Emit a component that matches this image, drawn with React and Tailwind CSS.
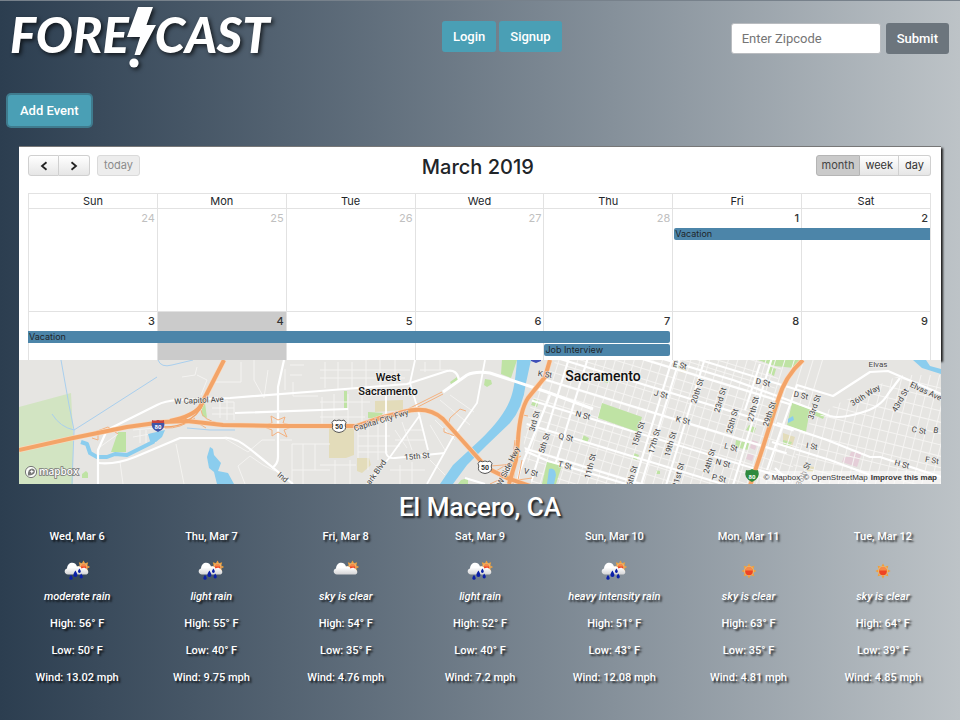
import React from "react";

const shadowText = "[text-shadow:2px_2px_2px_rgba(0,0,0,0.75)]";

const forecast = [
  { date: "Wed, Mar 6", icon: "rain", text: "moderate rain", high: 56, low: 50, wind: "13.02" },
  { date: "Thu, Mar 7", icon: "rain", text: "light rain", high: 55, low: 40, wind: "9.75" },
  { date: "Fri, Mar 8", icon: "cloud", text: "sky is clear", high: 54, low: 35, wind: "4.76" },
  { date: "Sat, Mar 9", icon: "rain", text: "light rain", high: 52, low: 40, wind: "7.2" },
  { date: "Sun, Mar 10", icon: "rain", text: "heavy intensity rain", high: 51, low: 43, wind: "12.08" },
  { date: "Mon, Mar 11", icon: "sun", text: "sky is clear", high: 63, low: 35, wind: "4.81" },
  { date: "Tue, Mar 12", icon: "sun", text: "sky is clear", high: 64, low: 39, wind: "4.85" },
];

const days = ["Sun", "Mon", "Tue", "Wed", "Thu", "Fri", "Sat"];

function Sun({ cx, cy, r }) {
  const rays = [0, 45, 90, 135, 180, 225, 270, 315];
  return (
    <g>
      {rays.map((a) => (
        <path
          key={a}
          d={`M${cx - 1.6} ${cy - r - 0.2}L${cx} ${cy - r - 3}L${cx + 1.6} ${cy - r - 0.2}Z`}
          fill="#f0a03c"
          transform={`rotate(${a} ${cx} ${cy})`}
        />
      ))}
      <circle cx={cx} cy={cy} r={r + 0.4} fill="#f2b765" />
      <circle cx={cx} cy={cy + 0.4} r={r - 0.8} fill="#ee4423" />
      <path d={`M${cx - r + 1} ${cy - 0.6}A${r - 1} ${r - 1} 0 0 1 ${cx + r - 1} ${cy - 0.6}Z`} fill="#f58a4a" />
    </g>
  );
}

function WeatherIcon({ kind }) {
  return (
    <svg width="28" height="22" viewBox="0 0 28 22" aria-hidden="true">
      <defs>
        <linearGradient id="cloud" x1="0" y1="0" x2="0" y2="1">
          <stop offset="0.4" stopColor="#ffffff" />
          <stop offset="1" stopColor="#d4d4d6" />
        </linearGradient>
      </defs>
      {kind === "sun" ? (
        <Sun cx={14} cy={11} r={4.6} />
      ) : (
        <g>
          <Sun cx={20.5} cy={7} r={3.6} />
          <path
            d="M5 14.5C1 14.5 0.6 9.5 4 8.6C4.2 4.8 6.6 2.8 9.2 2.8C11.8 2.8 13.4 4.4 14 6.6C16 5.6 18 6.8 18.4 8.4C21 7.2 22.4 7.8 24 9.4C26.2 11.4 25.6 14.5 22.6 14.5Z"
            fill="url(#cloud)"
          />
          {kind === "rain" && (
            <g fill="#0a1fa8">
              <path d="M12.4 10.6C13.8 13 14.4 13.8 14.4 15A2 2 0 0 1 10.4 15C10.4 13.8 11 13 12.4 10.6Z" />
              <path d="M16.4 8.6C17.4 10.2 17.8 10.8 17.8 11.6A1.4 1.4 0 0 1 15 11.6C15 10.8 15.4 10.2 16.4 8.6Z" />
              <path d="M18.2 13.4C19.4 15.2 19.8 16 19.8 16.8A1.6 1.6 0 0 1 16.6 16.8C16.6 16 17 15.2 18.2 13.4Z" />
              <path d="M8 14.8C9.2 16.6 9.6 17.4 9.6 18.2A1.6 1.6 0 0 1 6.4 18.2C6.4 17.4 6.8 16.6 8 14.8Z" />
            </g>
          )}
        </g>
      )}
    </svg>
  );
}

function Logo() {
  return (
    <h1
      aria-label="Forecast"
      className="flex h-[62px] items-start font-['Lato',sans-serif] text-[49px] leading-[56px] font-black italic text-white drop-shadow-[2px_2px_2px_rgba(0,0,0,0.7)]"
    >
      <span>FORE</span>
      <svg width="30" height="62" viewBox="0 0 30 62" className="-mx-[2px] shrink-0" aria-hidden="true">
        <path d="M11 1H26L19.5 19H29L13 49H7.5L13 31H0Z" fill="#fff" />
        <circle cx="7" cy="57" r="4.6" fill="#fff" />
      </svg>
      <span>CAST</span>
    </h1>
  );
}

function Header() {
  return (
    <header className="grid grid-cols-[46%_1fr_auto] items-start border-t border-[#77818b] pt-[5px] pr-[11px] pl-[10px]">
      <Logo />
      <nav className="flex gap-[3px] pt-[15px]">
        <button className="h-[31px] rounded-[3px] bg-[#4a9fb5] px-[11px] text-[13px] font-medium text-white">Login</button>
        <button className="h-[31px] rounded-[3px] bg-[#4a9fb5] px-[11px] text-[13px] font-medium text-white">Signup</button>
      </nav>
      <form className="flex gap-[5px] pt-[17px]" onSubmit={(e) => e.preventDefault()}>
        <input
          type="text"
          aria-label="Zipcode"
          placeholder="Enter Zipcode"
          className="h-[31px] w-[150px] rounded-[3px] border border-[#b9bcc0] bg-white px-[10px] text-[13px] placeholder:text-[#757575]"
        />
        <button className="h-[31px] rounded-[3px] bg-[#6c757d] px-[11px] text-[13px] font-medium text-white">Submit</button>
      </form>
    </header>
  );
}

const todayBg = (i, week) => (week === 2 && i === 1 ? "bg-[#cbcbcb]" : "");

function NumberRow({ numbers, week }) {
  return (
    <tr className="h-[20px]">
      {numbers.map((n, i) => (
        <td
          key={n}
          className={`border-t border-l border-[#e2e2e2] pr-[2px] text-right align-top text-[11px] leading-[18px] ${n > 20 ? "text-[#c0c0c0]" : "font-medium text-[#333]"} ${todayBg(i, week)}`}
        >
          {n}
        </td>
      ))}
    </tr>
  );
}

function Blank({ i, week }) {
  return <td className={`border-l border-[#e2e2e2] ${todayBg(i, week)}`} />;
}

function Event({ title, round }) {
  return (
    <a href="#event" className={`block h-[12px] overflow-hidden bg-[#4c85a9] pl-px text-[9px] leading-[12px] text-[#212529] ${round}`}>
      {title}
    </a>
  );
}

function Calendar() {
  const tool = "h-[21px] border border-[#d0d0d0] text-[11px] text-[#333]";
  return (
    <section className="h-[214px] overflow-hidden border-t border-[#777] bg-white pt-[8px] pr-[10px] pl-[9px] font-['Inter',sans-serif] shadow-[2px_2px_2px_#222]">
      <div className="flex h-[24px] items-start justify-between">
        <div className="flex">
          <button aria-label="Previous" className={`${tool} flex w-[31px] items-center justify-center rounded-l-[3px] bg-linear-to-b from-white to-[#e6e6e6]`}>
            <svg width="8" height="10" viewBox="0 0 8 10" fill="none" stroke="#222" strokeWidth="1.8"><path d="M6.5 1.2L2 5L6.5 8.8" /></svg>
          </button>
          <button aria-label="Next" className={`${tool} flex w-[31px] items-center justify-center rounded-r-[3px] border-l-0 bg-linear-to-b from-white to-[#e6e6e6]`}>
            <svg width="8" height="10" viewBox="0 0 8 10" fill="none" stroke="#222" strokeWidth="1.8"><path d="M1.5 1.2L6 5L1.5 8.8" /></svg>
          </button>
          <button disabled className="ml-[7px] h-[21px] rounded-[3px] border border-[#dadada] bg-[#ededed] px-[6px] text-[11px] text-[#8b8b8b]">today</button>
        </div>
        <h2 className="text-[20px] leading-[24px] font-medium text-[#212529]">March 2019</h2>
        <div className="flex justify-end">
          <button className="h-[21px] rounded-l-[3px] border border-[#b5b5b5] bg-[#cacaca] px-[5px] text-[11px] text-[#444]">month</button>
          <button className={`${tool} border-l-0 bg-linear-to-b from-white to-[#e6e6e6] px-[5px]`}>week</button>
          <button className={`${tool} rounded-r-[3px] border-l-0 bg-linear-to-b from-white to-[#e6e6e6] px-[6px]`}>day</button>
        </div>
      </div>
      <table className="mt-[14px] w-full table-fixed border-separate border-spacing-0 border-t border-r border-[#e2e2e2]">
        <thead>
          <tr className="h-[14px]">
            {days.map((d) => (
              <th key={d} className="border-l border-[#e2e2e2] text-[11px] leading-[14px] font-normal text-[#212529]">{d}</th>
            ))}
          </tr>
        </thead>
        <tbody>
          <NumberRow week={1} numbers={[24, 25, 26, 27, 28, 1, 2]} />
          <tr className="h-[12px]">
            {[0, 1, 2, 3, 4].map((i) => <Blank key={i} i={i} week={1} />)}
            <td colSpan={2} className="border-l border-[#e2e2e2] pl-px"><Event title="Vacation" round="rounded-l-[2px]" /></td>
          </tr>
          <tr className="h-[71px]">{days.map((d, i) => <Blank key={d} i={i} week={1} />)}</tr>
          <NumberRow week={2} numbers={[3, 4, 5, 6, 7, 8, 9]} />
          <tr className="h-[12px]">
            <td colSpan={5} className="pr-[2px]"><Event title="Vacation" round="rounded-r-[2px]" /></td>
            <Blank i={5} week={2} />
            <Blank i={6} week={2} />
          </tr>
          <tr className="h-[13px]">
            {[0, 1, 2, 3].map((i) => <Blank key={i} i={i} week={2} />)}
            <td className="border-l border-[#e2e2e2] pt-px pr-[2px]"><Event title="Job Interview" round="rounded-[2px]" /></td>
            <Blank i={5} week={2} />
            <Blank i={6} week={2} />
          </tr>
          <tr className="h-[71px]">{days.map((d, i) => <Blank key={d} i={i} week={2} />)}</tr>
        </tbody>
      </table>
    </section>
  );
}

const streets = [
  ["W Capitol Ave", 199, 400, -3], ["Capital City Fwy", 381, 420, -17], ["15th St", 417, 456, -5],
  ["ark Blvd", 376, 472, -54], ["Ind", 283, 477, 40], ["K St", 545, 374, 8], ["3rd St", 534, 421, -75],
  ["5th St", 544, 443, -72], ["N St", 583, 415, 14], ["Q St", 566, 437, 12], ["T St", 565, 465, 14],
  ["V St", 531, 472, 14], ["11th St", 590, 466, -76], ["15th St", 638, 434, -72], ["17th St", 654, 441, -74],
  ["19th St", 670, 444, -74], ["21st St", 678, 475, -74], ["16th St", 631, 478, -74], ["24th St", 709, 461, -74],
  ["25th St", 732, 421, -74], ["27th St", 753, 409, -76], ["29th St", 769, 414, -72], ["33rd St", 814, 407, -72],
  ["20th St", 697, 391, -72], ["23rd St", 720, 400, -74], ["E St", 680, 365, 12], ["J St", 661, 394, 14],
  ["K St", 683, 420, 14], ["L St", 731, 447, 14], ["N St", 723, 463, 14], ["P St", 719, 478, 14],
  ["D St", 763, 382, 12], ["D St", 801, 395, 12], ["36th Way", 865, 395, -32], ["43rd St", 900, 400, -60],
  ["C St", 919, 430, 10], ["B", 936, 430, 10], ["F St", 932, 460, 10], ["H St", 902, 464, 14],
  ["I St", 812, 446, 10], ["Elvas", 878, 364, 0], ["Elvas Ave", 926, 391, 25], ["W Side Hwy", 508, 466, -64],
  ["36th St", 803, 474, -66],
];

const steps = (from, to, by) => {
  const out = [];
  for (let v = from; v <= to; v += by) out.push(v);
  return out;
};

function Shield50({ x, y }) {
  return (
    <g transform={`translate(${x} ${y})`}>
      <path d="M-5-6Q-2.5-4.6 0-6Q2.5-4.6 5-6L7-3.5Q5.6-1 6.6 1.5Q6.4 5.5 0 6.5Q-6.4 5.5-6.6 1.5Q-5.6-1-7-3.5Z" fill="#fff" stroke="#555" strokeWidth="1" />
      <text y="3" textAnchor="middle" fontSize="7" fontWeight="700" fill="#333">50</text>
    </g>
  );
}

function MapDrawing() {
  return (
    <svg viewBox="19 360 922 124" preserveAspectRatio="xMidYMid slice" className="block h-full w-full" role="img" aria-label="Map of Sacramento">
      <defs>
        <clipPath id="east"><path d="M556 360H941V484H532L523 440L532 400Z" /></clipPath>
        <clipPath id="outer"><path d="M835 405L900 375H941V484H790L800 430Z" /></clipPath>
      </defs>
      <rect x="19" y="360" width="922" height="124" fill="#e6e5e2" />
      <path d="M19 407L71 393L73 433V484H19Z" fill="#d2e4c2" />

      <g fill="#e3dcba">
        <path d="M329 428H354V455L346 458H329Z" />
        <path d="M375 401L403 400V410L375 412Z" />
        <path d="M357 458H369L371 465L362 473L357 471Z" />
        <path d="M783 433L795 437L792 447L783 443ZM679 367L686 369V373L680 372Z" />
        <path d="M808 466L815 467L813 472H807Z" />
      </g>
      <g fill="#bfe3a4">
        <path d="M118 432H126V452H111Z" />
        <path d="M82 474L86 471L88 473V478H82ZM202 403H205L207 418L202 416Z" />
        <path d="M368 412L383 413L378 420L368 418ZM344 391H347V408H344ZM450 382L457 377L458 380L451 384Z" />
        <path d="M485 379L491 380L492 384L487 387L484 385ZM502 360H517L511 378L501 374Z" />
        <path d="M534 399L539 401L537 407L531 405Z" />
        <path d="M583 435L589 438L587 443L581 440ZM634 453L639 455L637 460L632 458Z" />
        <path d="M461 480L468 478V484H458Z" />
        <path d="M769 366L776 369L774 376L767 372ZM758 360H803L794 368L775 366Z" />
        <path d="M749 425L756 428L754 433L746 430ZM736 440L749 443L748 450L735 447ZM783 440L792 442L790 446L783 445ZM815 411L825 415L823 419L814 415ZM606 378L611 379L609 383L604 382ZM676 364L680 366L678 371L674 369ZM656 470L660 471V474H656Z" />
      </g>
      <g fill="#e5ced8">
        <path d="M851 452H862L857 467L842 462L844 457L849 457Z" />
        <path d="M752 440L758 442L755 450L750 448ZM748 453L754 455L752 461L746 459Z" />
      </g>

      <g fill="none" stroke="#a9cfee" strokeWidth="1">
        <path d="M61 360L69 405L74 430L72 484M157 377L93 418L74 430Q60 427 52 414M158 360Q161 368 172 365L193 360M187 428L210 430H235" />
      </g>
      <g fill="none" stroke="#f4f3f1" strokeWidth="1">
        <path d="M182 377L195 375L197 367M197 375L207 380L201 395M241 362V382H215M254 360V380L264 398L268 370M290 365H304M290 375H302M293 382V396H318M285 369V390" />
        <path d="M215 402H234V420M220 400V418M227 400V420M212 408H234M212 414H234M133 430L156 428M133 437L150 434M140 430V443M146 430V443M100 447L118 434M176 444L184 484M120 462L123 484" />
        <path d="M238 466L250 456L263 465L275 471M238 466L245 484M292 444H330M292 444V484M303 444V484M315 444V470M280 440H292M292 470H330M224 438L248 452L262 440H275" />
        <path d="M320 370H410M325 362V388M338 362V389M352 362V388M366 360V387M380 360V385M395 360V384M320 378H405M322 397V425M334 394V425M348 394V426M362 394V424M320 402H370M320 417H365M358 430V458M368 428V470M378 425V460M358 436H390M358 446H400M358 452H388M320 465H356M335 460V484M350 460V484M395 430L407 448M402 422L412 450M395 440H425M404 430H422M430 425L445 450M435 420L455 440M440 400L470 425M450 395L474 412M420 370H448M425 362V372M440 360V370M430 460L445 475M400 465V484M412 462V484M390 470H425" />
      </g>

      <g clipPath="url(#east)">
        <g transform="rotate(17 640 420)" stroke="#f5f4f2" strokeWidth="1" fill="none">
          {steps(290, 550, 10).map((y) => <path key={y} d={`M480 ${y}H${y < 400 ? 760 : 800}`} />)}
          {steps(500, 800, 9).map((x) => <path key={x} d={`M${x} 250V600`} />)}
        </g>
        <g transform="rotate(17 640 420)" stroke="#fff" strokeWidth="2.1" fill="none">
          {[345, 361, 385, 409, 433, 457, 481].map((y) => <path key={y} d={`M480 ${y}H790`} />)}
          {[554, 572, 653, 660, 684, 748].map((x) => <path key={x} d={`M${x} 250V600`} />)}
        </g>
      </g>
      <g clipPath="url(#outer)">
        <g transform="rotate(14 860 430)" stroke="#f5f4f2" strokeWidth="1" fill="none">
          {steps(370, 510, 11).map((y) => <path key={y} d={`M770 ${y}H970`} />)}
          {steps(780, 970, 9).map((x) => <path key={x} d={`M${x} 340V520`} />)}
        </g>
      </g>
      <g fill="#bfe3a4">
        <path d="M602 403L642 417L638 432L598 418Z" />
        <path d="M547 462L562 465L556 484H542Z" />
        <path d="M792 403L810 409L806 432L787 425Z" />
      </g>

      <path d="M81 442L87 444L90 453L97 457L107 457L115 454L127 455L143 447L153 442L156 434" fill="none" stroke="#8bcdee" strokeWidth="4" strokeLinejoin="round" />
      <path d="M148 434L165 430L162 437L156 442L150 441Z" fill="#8bcdee" />
      <path d="M210 447L207 457L209 468L214 472L217 484H234L228 473L218 471L221 463L214 455L213 449Z" fill="#8bcdee" />
      <path d="M517 360H531L526 383Q523 408 510 423L487 445L467 465L453 484H440L453 465L480 440Q503 418 510 400Q515 388 517 360Z" fill="#8bcdee" />
      <path d="M549 469Q555 467 556 475L554 484H547Z" fill="#8bcdee" />
      <path d="M913 360L922 368L941 374V369L930 366L926 360ZM788 419L793 416L794 420L788 423Z" fill="#8bcdee" />

      <g fill="none" stroke="#fff" strokeWidth="2.2" strokeLinejoin="round">
        <path d="M98 484V450L107 430L157 405Q165 401 177 400L230 398L320 391L407 384L447 371Q457 369 459 380" />
        <path d="M98 463Q115 465 135 457L180 438H223Q234 436 250 449L293 484" />
        <path d="M284 360L278 387V457Q278 464 272 468M235 413L348 409" />
        <path d="M415 360L410 383L418 410L428 450M485 360L477 403L453 437L427 484M420 415L390 457L367 484" strokeWidth="1.8" />
        <path d="M386 393V453Q388 459 395 458L445 453" strokeWidth="1.8" />
        <path d="M443 392L467 375Q475 371 490 373L547 392L593 409" strokeWidth="3" />
        <path d="M550 395L520 470L517 484M465 478L485 484M525 451L548 461L640 488" />
        <path d="M660 358L733 380L780 397L830 416Q840 419 860 413Q880 408 888 394L900 378" />
        <path d="M767 470L797 385L833 396L870 372L888 371L941 394" />
        <path d="M777 423L827 440L870 457H880L941 477M772 442L830 460L870 475M760 364L745 410M775 468L790 482" />
      </g>

      <g fill="none" stroke="#f4b17f" strokeWidth="1">
        <path d="M408 409L442 392M410 411L443 394M448 425L450 418L460 409L466 411M444 428V432L458 437M523 415L528 416" />
        <path d="M262 426L272 423L271 416L278 420L285 417L283 423L294 426M262 426L272 430L272 436L278 432L287 437L284 430L294 426" />
        <path d="M92 433L108 427L118 434M92 438L98 440V434M201 410Q201 420 222 424M187 421Q198 422 206 428M165 428Q180 429 195 418" />
        <path d="M491 466L515 464L513 484M496 471L521 456M509 475L490 484M522 460L518 480L532 478M515 440L512 464" />
      </g>
      <g fill="none" stroke="#fbd9bd" strokeLinejoin="round">
        <path d="M19 450L73 438L127 427L163 422L187 421L223 425L277 426H357L380 418L403 412Q428 405 443 419L487 468L507 478L530 486" strokeWidth="5.2" />
        <path d="M550 360L545 377L528 398Q520 410 518 440L516 460L509 484M803 360Q785 376 778 400L763 447L750 486M224 360L200 407Q193 416 170 421" strokeWidth="5.2" />
      </g>
      <g fill="none" stroke="#f3a468" strokeLinejoin="round">
        <path d="M19 450L73 438L127 427L163 422L187 421L223 425L277 426H357L380 418L403 412Q428 405 443 419L487 468L507 478L530 486" strokeWidth="4" />
        <path d="M550 360L545 377L528 398Q520 410 518 440L516 460L509 484M803 360Q785 376 778 400L763 447L750 486M224 360L200 407Q193 416 170 421" strokeWidth="4" />
        <path d="M204 402Q198 417 184 422M200 406L185 419" strokeWidth="1.4" />
        <path d="M163 427Q180 427 190 420" strokeWidth="1.4" />
      </g>

      <g fontSize="8" fill="#444" stroke="#f0efed" strokeWidth="1.4" strokeOpacity="0.8" paintOrder="stroke" textAnchor="middle">
        {streets.map(([name, x, y, angle]) => (
          <text key={`${name}${x}`} transform={`translate(${x} ${y}) rotate(${angle})`} y="3">{name}</text>
        ))}
      </g>
      <g fill="#111" stroke="#f3f2f0" strokeWidth="2" strokeOpacity="0.8" paintOrder="stroke" textAnchor="middle" fontWeight="500">
        <text x="388" y="381" fontSize="11">West</text>
        <text x="388" y="395" fontSize="11">Sacramento</text>
        <text x="603" y="381" fontSize="14">Sacramento</text>
      </g>

      <path d="M152 421Q155 422 158 420Q161 422 164 421Q166 429 158 432Q150 429 152 421Z" fill="#3f55a8" />
      <path d="M152 423V420Q155 421 158 420Q161 421 164 420V423Z" fill="#c8443c" />
      <text x="158" y="429" textAnchor="middle" fontSize="6" fontWeight="700" fill="#fff">80</text>
      <path d="M531 360H541V361L536 363L531 361Z" fill="#3f4fb8" />
      <Shield50 x={339} y={426} />
      <Shield50 x={485} y={467} />
      <path d="M746 470Q749 471 752 469Q755 471 758 470Q761 478 752 482Q743 478 746 470Z" fill="#2f8a3e" />
      <text x="752" y="479" textAnchor="middle" fontSize="6" fontWeight="700" fill="#fff">80</text>
    </svg>
  );
}

function MapPanel() {
  return (
    <section className="relative h-[124px] overflow-hidden">
      <MapDrawing />
      <a href="#mapbox" aria-label="mapbox" className="absolute bottom-[4px] left-[5px]">
        <svg width="60" height="16" viewBox="0 0 60 16" className="block font-['Open_Sans',sans-serif]">
          <circle cx="7" cy="8" r="5.6" fill="#fff" fillOpacity="0.9" stroke="#777" strokeWidth="1" />
          <path d="M4 11.4Q3.4 5 8 4.4Q11.4 5 10.8 8Q10 11.6 4 11.4Z" fill="#777" />
          <path d="M7.8 5.4L8.5 7L10 7.6L8.5 8.3L7.8 9.8L7.1 8.3L5.6 7.6L7.1 7Z" fill="#fff" />
          <text x="15" y="11" fontSize="10" fontWeight="600" fill="#fff" stroke="#777" strokeWidth="1.6" paintOrder="stroke">mapbox</text>
        </svg>
      </a>
      <div className="absolute right-0 bottom-0 flex h-[13px] items-center gap-[3px] bg-white/50 pr-[4px] pl-[4px] font-['Liberation_Sans',sans-serif] text-[8px] leading-[13px] text-[#333]">
        <a href="#mapbox">© Mapbox</a>
        <a href="#osm">© OpenStreetMap</a>
        <a href="#improve" className="font-bold">Improve this map</a>
      </div>
    </section>
  );
}

export default function App() {
  return (
    <div className="min-h-screen bg-linear-to-r from-[#2c3e50] to-[#bdc3c7] font-['Roboto',sans-serif]">
      <Header />
      <div className="px-[8px] pt-[27px]">
        <button className="block h-[31px] rounded-[3px] bg-[#4a9fb5] px-[12px] text-[13px] font-medium text-white ring-2 ring-[#3f7b8e]">Add Event</button>
      </div>
      <main>
        <div className="mr-[19px] ml-[19px] mt-[20px]">
          <Calendar />
          <MapPanel />
        </div>
        <h2 className={`pt-[7px] text-center text-[26px] leading-[32px] font-medium text-white ${shadowText}`}>El Macero, CA</h2>
        <div className={`grid grid-cols-7 px-[10px] text-center text-[11px] leading-[27px] font-medium text-white ${shadowText}`}>
          {forecast.map((d) => (
            <article key={d.date} className="flex flex-col items-center">
              <h3>{d.date}</h3>
              <div className="flex h-[33px] items-center pt-[8px]"><WeatherIcon kind={d.icon} /></div>
              <p className="italic">{d.text}</p>
              <p>High: {d.high}° F</p>
              <p>Low: {d.low}° F</p>
              <p>Wind: {d.wind} mph</p>
            </article>
          ))}
        </div>
      </main>
    </div>
  );
}
